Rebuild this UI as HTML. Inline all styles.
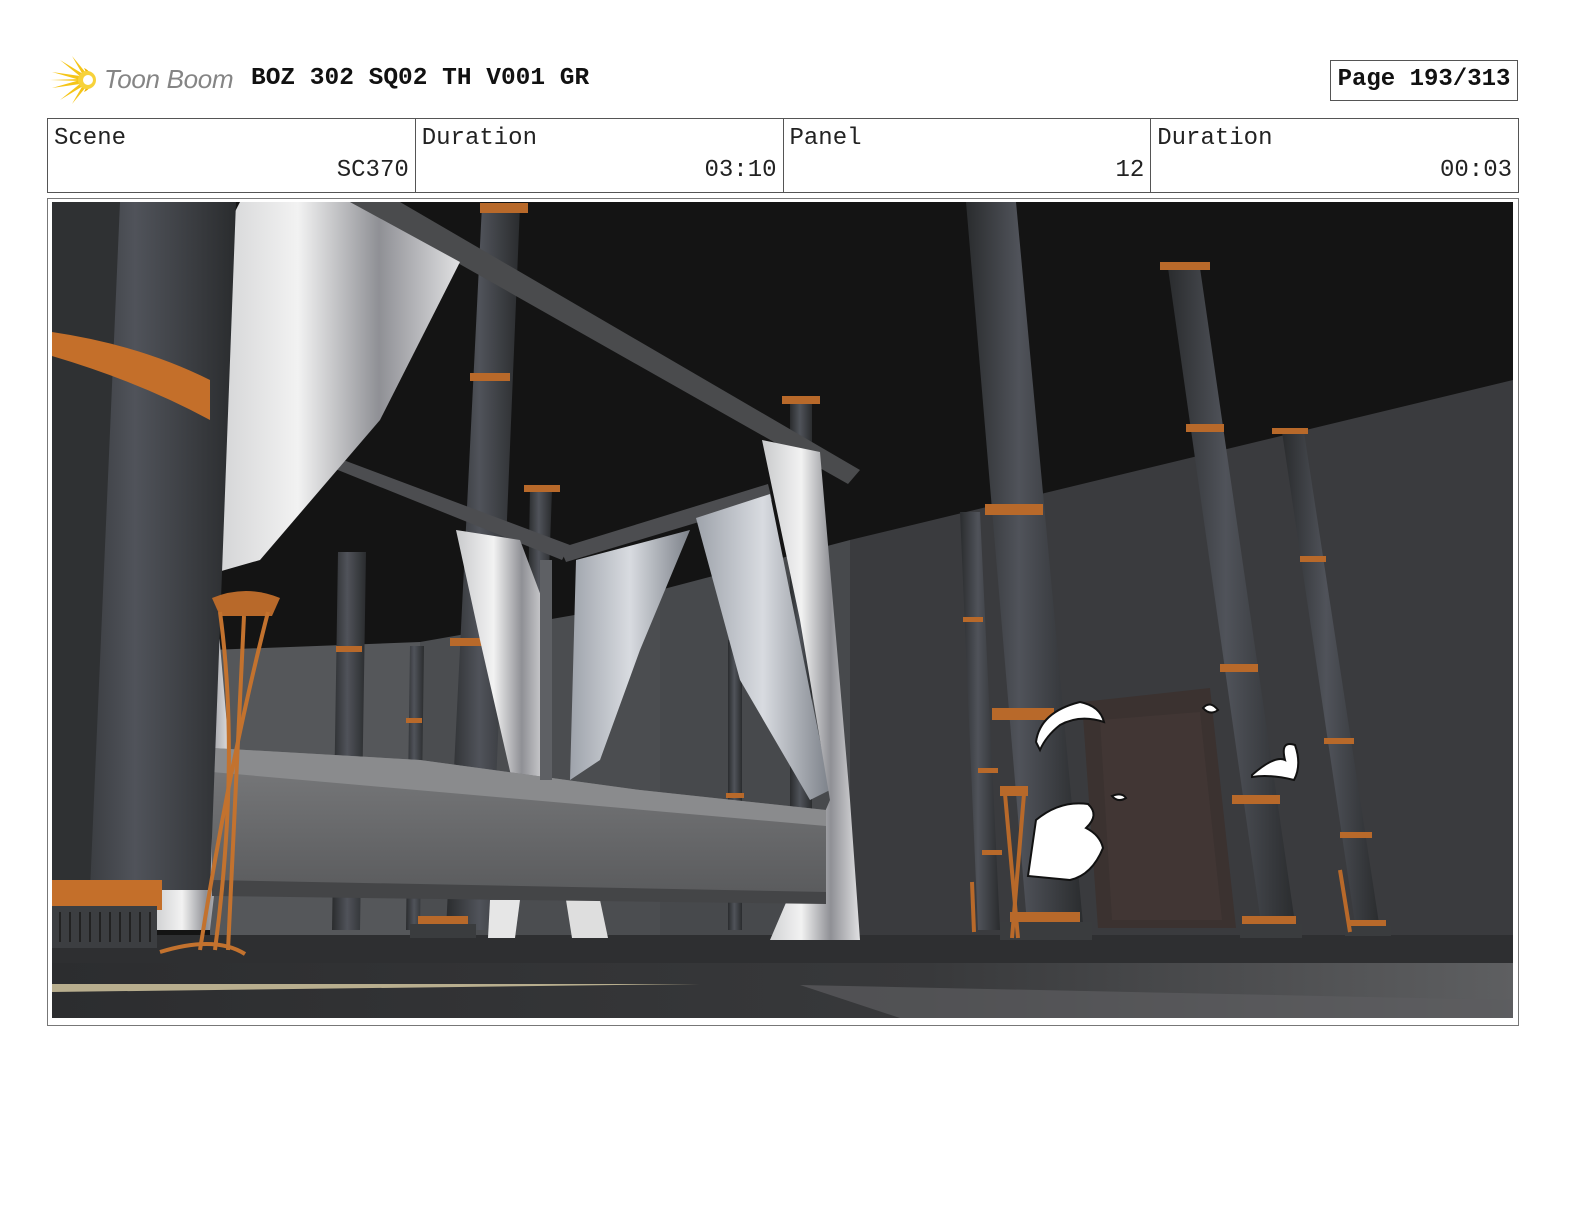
<!DOCTYPE html>
<html><head><meta charset="utf-8"><style>
html,body{margin:0;padding:0;background:#fff;}
body{width:1584px;height:1224px;position:relative;overflow:hidden;font-family:"Liberation Mono",monospace;}
.title{position:absolute;left:251px;top:65px;font-size:24.5px;font-weight:bold;color:#111;}
.tb{position:absolute;left:104px;top:64px;font-family:"Liberation Sans",sans-serif;font-style:italic;font-size:26px;color:#858585;letter-spacing:-0.3px;}
.page{position:absolute;left:1330px;top:60px;width:188px;height:41px;border:1px solid #555;box-sizing:border-box;font-weight:bold;font-size:24px;line-height:38px;text-align:center;color:#111;}
table{position:absolute;left:47px;top:118px;width:1472px;height:75px;border-collapse:collapse;}
td{border:1px solid #555;width:25%;padding:0;position:relative;font-size:24px;color:#222;}
td .l{position:absolute;left:6px;top:6px;}
td .v{position:absolute;right:6px;top:38px;}
.frame{position:absolute;left:47px;top:198px;width:1472px;height:828px;border:1px solid #777;box-sizing:border-box;}
svg.sc{position:absolute;left:52px;top:202px;}
</style></head><body>
<svg style="position:absolute;left:50px;top:54px" width="52" height="52" viewBox="0 0 52 52">
<g fill="#f5c518">
<polygon points="30,26 2,18 30,22"/><polygon points="30,26 2,34 30,30"/>
<polygon points="31,23 10,6 33,20"/><polygon points="31,29 10,46 33,32"/>
<polygon points="33,21 22,2 36,19"/><polygon points="33,31 22,50 36,33"/>
<polygon points="30,25 0,26 30,27"/>
<path d="M34,14 A13,13 0 0 1 34,38 L36,34 A9,9 0 0 0 36,18 Z" fill="#f0b400"/>
<circle cx="37" cy="26" r="9" fill="#f7d23a"/><circle cx="38" cy="26" r="5" fill="#fff"/>
</g></svg>
<div class="tb">Toon Boom</div>
<div class="title">BOZ 302 SQ02 TH V001 GR</div>
<div class="page">Page 193/313</div>
<table><tr>
<td><span class="l">Scene</span><span class="v">SC370</span></td>
<td><span class="l">Duration</span><span class="v">03:10</span></td>
<td><span class="l">Panel</span><span class="v">12</span></td>
<td><span class="l">Duration</span><span class="v">00:03</span></td>
</tr></table>
<div class="frame"></div>
<svg class="sc" width="1461" height="816" viewBox="52 202 1461 816">
<defs>
<linearGradient id="col" x1="0" x2="1"><stop offset="0" stop-color="#2a2c2e"/><stop offset=".45" stop-color="#50535a"/><stop offset="1" stop-color="#2a2c2e"/></linearGradient>
<linearGradient id="cur" x1="0" x2="1"><stop offset="0" stop-color="#c9cacc"/><stop offset=".4" stop-color="#f2f2f2"/><stop offset=".7" stop-color="#8f9095"/><stop offset="1" stop-color="#e0e0e2"/></linearGradient>
<linearGradient id="cur2" x1="0" x2="1"><stop offset="0" stop-color="#9ea3ab"/><stop offset=".5" stop-color="#d8dbe0"/><stop offset="1" stop-color="#7d828a"/></linearGradient>
<linearGradient id="bed" x1="0" y1="0" x2="0" y2="1"><stop offset="0" stop-color="#7a7b7d"/><stop offset="1" stop-color="#595a5c"/></linearGradient>
<linearGradient id="fl" x1="0" x2="1"><stop offset="0" stop-color="#2c2d2f"/><stop offset=".6" stop-color="#38393b"/><stop offset="1" stop-color="#5e5f61"/></linearGradient>
</defs>
<rect x="52" y="202" width="1461" height="816" fill="#141414"/>
<polygon points="850,540 1513,380 1513,940 850,940" fill="#3a3b3e"/>
<polygon points="660,590 850,540 850,940 660,940" fill="#47494c"/>
<polygon points="210,650 420,642 420,940 210,940" fill="#55575a"/>
<polygon points="420,642 660,600 660,940 420,940" fill="#4b4d50"/>
<rect x="52" y="935" width="1461" height="83" fill="url(#fl)"/>
<rect x="52" y="935" width="1461" height="28" fill="#2e2f31"/>
<polygon points="52,984 700,984 52,992" fill="#b8ae8e"/>
<polygon points="800,985 1513,1000 1513,1018 900,1018" fill="#5c5d60" opacity=".7"/>
<g fill="url(#col)">
<polygon points="338,552 366,552 360,930 332,930"/>
<polygon points="410,646 424,646 420,930 406,930"/>
<polygon points="530,490 552,490 548,600 528,600"/>
<polygon points="728,640 742,640 742,930 728,930"/>
<polygon points="790,400 812,400 812,820 790,820"/>
<polygon points="960,512 980,512 1000,930 978,930"/>
<polygon points="1168,268 1200,268 1296,930 1262,930"/>
<polygon points="1282,432 1304,432 1380,930 1356,930"/>
<polygon points="482,205 520,205 490,930 446,930"/>
<polygon points="966,202 1016,202 1084,935 1028,935"/>
</g>
<g fill="#b8692a">
<rect x="336" y="646" width="26" height="6"/><rect x="406" y="718" width="16" height="5"/>
<rect x="470" y="373" width="40" height="8"/><rect x="450" y="638" width="36" height="8"/>
<rect x="726" y="793" width="18" height="5"/><rect x="963" y="617" width="20" height="5"/>
<rect x="985" y="504" width="58" height="11"/><rect x="992" y="708" width="62" height="12"/>
<rect x="1186" y="424" width="38" height="8"/><rect x="1220" y="664" width="38" height="8"/>
<rect x="1232" y="795" width="48" height="9"/><rect x="1300" y="556" width="26" height="6"/>
<rect x="1324" y="738" width="30" height="6"/><rect x="1340" y="832" width="32" height="6"/>
<rect x="1272" y="428" width="36" height="6"/><rect x="1160" y="262" width="50" height="8"/>
<rect x="480" y="203" width="48" height="10"/><rect x="782" y="396" width="38" height="8"/>
<rect x="524" y="485" width="36" height="7"/><rect x="978" y="768" width="20" height="5"/>
<rect x="982" y="850" width="20" height="5"/><rect x="1010" y="912" width="70" height="12"/>
<rect x="1242" y="916" width="54" height="10"/><rect x="1350" y="920" width="36" height="8"/>
<rect x="418" y="916" width="50" height="10"/>
</g>
<g fill="#3a3c3e"><rect x="1000" y="922" width="92" height="18"/><rect x="1240" y="924" width="62" height="14"/><rect x="410" y="924" width="66" height="14"/><rect x="1345" y="926" width="46" height="10"/></g>
<polygon points="1082,702 1210,688 1236,928 1098,928" fill="#3b3230"/>
<polygon points="1100,720 1200,712 1222,920 1112,920" fill="#413634"/>
<polygon points="350,202 400,202 860,470 848,484" fill="#4a4b4d"/>
<polygon points="318,462 330,455 570,545 562,560" fill="#4c4d50"/>
<polygon points="560,548 768,484 772,500 566,562" fill="#4c4d50"/>
<polygon points="240,202 350,202 460,262 380,420 260,560 190,580 200,280" fill="url(#cur)"/>
<polygon points="176,580 214,575 230,760 210,930 150,930 170,780" fill="url(#cur)"/>
<polygon points="456,530 520,540 550,620 540,780 512,780 480,640" fill="url(#cur)"/>
<polygon points="576,560 690,530 640,650 600,760 570,780" fill="url(#cur2)"/>
<polygon points="696,518 770,494 830,790 810,800 740,680" fill="url(#cur2)"/>
<polygon points="762,440 820,452 850,800 860,940 770,940 830,800 800,620" fill="url(#cur)"/>
<polygon points="490,900 520,900 515,938 488,938" fill="#e6e6e6"/>
<polygon points="566,900 600,900 608,938 572,938" fill="#dedede"/>
<polygon points="212,748 420,760 640,790 826,810 826,900 212,886" fill="url(#bed)"/>
<polygon points="212,748 420,760 640,790 826,810 826,826 212,772" fill="#8a8b8d"/>
<polygon points="212,880 826,892 826,904 212,896" fill="#444547"/>
<rect x="540" y="560" width="12" height="220" fill="#5e6064"/>
<polygon points="52,202 236,202 210,890 52,890" fill="url(#col)"/>
<polygon points="52,202 120,202 90,890 52,890" fill="#2f3133"/>
<path d="M52,332 Q140,345 210,380 L210,420 Q140,382 52,356 Z" fill="#c46f2a"/>
<rect x="52" y="880" width="110" height="30" fill="#c46f2a"/>
<rect x="52" y="906" width="105" height="42" fill="#3c3e41"/>
<g stroke="#222" stroke-width="2"><path d="M60,912v30M70,912v30M80,912v30M90,912v30M100,912v30M110,912v30M120,912v30M130,912v30M140,912v30M150,912v30"/></g>
<path d="M212,598 Q246,584 280,598 L272,616 L220,616 Z" fill="#b8692a"/>
<g stroke="#c3722e" stroke-width="4" fill="none"><path d="M220,612 Q240,760 215,950"/><path d="M268,612 Q230,760 200,950"/><path d="M244,616 L228,950"/><path d="M160,952 Q215,935 245,954"/></g>
<rect x="1000" y="786" width="28" height="10" fill="#b8692a"/>
<g stroke="#b8692a" stroke-width="4"><path d="M1005,794 L1018,938"/><path d="M1024,794 L1012,938"/><path d="M972,882 L974,932"/><path d="M1340,870 L1350,932"/></g>
<g fill="#fff" stroke="#111" stroke-width="2">
<path d="M1036,742 Q1040,712 1080,702 Q1100,706 1104,722 Q1080,714 1060,725 Q1046,736 1040,750 Z"/>
<path d="M1036,820 Q1060,800 1088,804 Q1100,815 1086,828 Q1100,835 1103,848 Q1092,875 1070,880 L1028,876 Z"/>
<path d="M1252,775 Q1275,755 1285,760 Q1280,740 1295,745 Q1302,765 1294,780 Q1270,774 1252,777 Z"/>
<path d="M1203,708 Q1210,700 1218,710 Q1210,716 1203,708 Z"/>
<path d="M1112,796 Q1122,792 1126,798 Q1118,803 1112,796 Z"/>
</g>
</svg>
</body></html>
